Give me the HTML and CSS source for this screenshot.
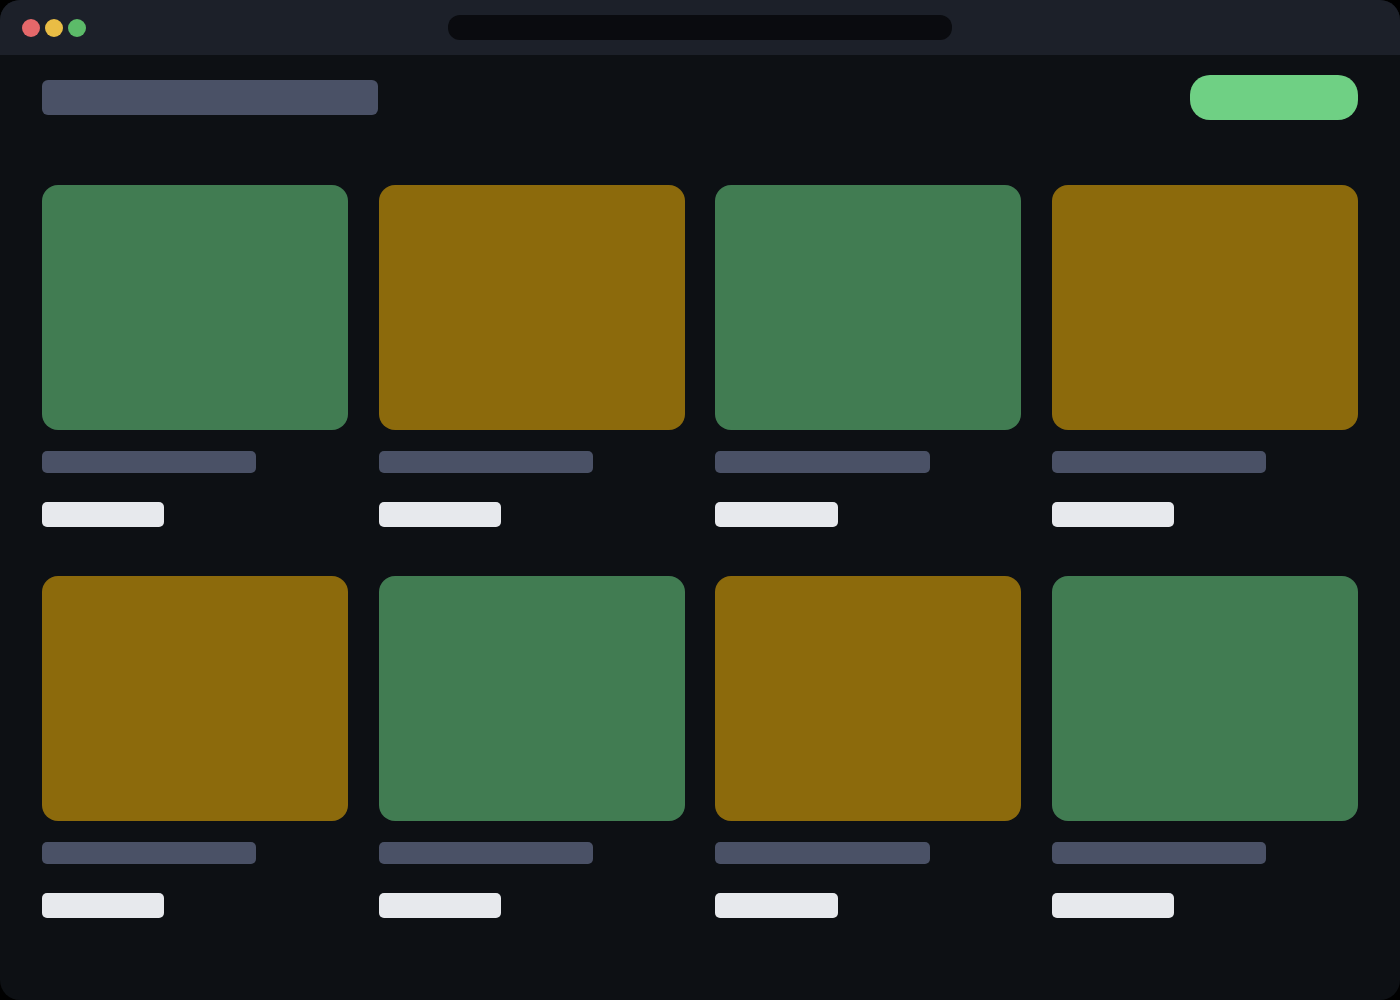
FILE: index.html
```html
<!DOCTYPE html>
<html lang="en">
<head>
    <meta charset="UTF-8">
    <meta name="viewport" content="width=device-width, initial-scale=1.0">
    <title>Product grid</title>
    <link rel="stylesheet" href="styles.css">
</head>
<body>
    <div class="window">
        <div class="titlebar">
            <div class="dots">
                <span class="dot dot-red"></span>
                <span class="dot dot-yellow"></span>
                <span class="dot dot-green"></span>
            </div>
            <div class="address-bar"></div>
        </div>

        <div class="content">
            <div class="header">
                <div class="title"></div>
                <div class="action-btn"></div>
            </div>

            <div class="grid">
                <div class="card">
                    <div class="thumb thumb-green"></div>
                    <div class="card-title"></div>
                    <div class="card-price"></div>
                </div>
                <div class="card">
                    <div class="thumb thumb-amber"></div>
                    <div class="card-title"></div>
                    <div class="card-price"></div>
                </div>
                <div class="card">
                    <div class="thumb thumb-green"></div>
                    <div class="card-title"></div>
                    <div class="card-price"></div>
                </div>
                <div class="card">
                    <div class="thumb thumb-amber"></div>
                    <div class="card-title"></div>
                    <div class="card-price"></div>
                </div>
                <div class="card">
                    <div class="thumb thumb-amber"></div>
                    <div class="card-title"></div>
                    <div class="card-price"></div>
                </div>
                <div class="card">
                    <div class="thumb thumb-green"></div>
                    <div class="card-title"></div>
                    <div class="card-price"></div>
                </div>
                <div class="card">
                    <div class="thumb thumb-amber"></div>
                    <div class="card-title"></div>
                    <div class="card-price"></div>
                </div>
                <div class="card">
                    <div class="thumb thumb-green"></div>
                    <div class="card-title"></div>
                    <div class="card-price"></div>
                </div>
            </div>
        </div>
    </div>
</body>
</html>
```

FILE: styles.css
```css
body {
    margin: 0;
    background-color: #000;
    font-family: 'Liberation Sans', sans-serif;
}
.window {
    height: 1000px;
    background-color: #0d1014;
    border-radius: 20px;
    overflow: hidden;
}
.titlebar {
    height: 55px;
    box-sizing: border-box;
    padding-left: 22px;
    background-color: #1c2029;
    display: flex;
    align-items: center;
}
.dots {
    display: flex;
    gap: 5px;
}
.dot {
    width: 18px;
    height: 18px;
    border-radius: 50%;
}
.dot-red {
    background-color: #e5686a;
}
.dot-yellow {
    background-color: #e9bd45;
}
.dot-green {
    background-color: #5cbb69;
}
.address-bar {
    width: 504px;
    height: 25px;
    border-radius: 12px;
    background-color: #0a0b0f;
    margin-left: 362px;
}
.content {
    padding: 20px 42px 0;
}
.header {
    display: flex;
    justify-content: space-between;
    align-items: center;
    margin-bottom: 65px;
}
.title {
    width: 336px;
    height: 35px;
    border-radius: 6px;
    background-color: #4a5166;
}
.action-btn {
    width: 168px;
    height: 45px;
    border-radius: 20px;
    background-color: #6fd084;
}
.grid {
    display: grid;
    grid-template-columns: repeat(4, 306px);
    justify-content: space-between;
    row-gap: 49px;
}
.thumb {
    height: 245px;
    border-radius: 16px;
}
.thumb-green {
    background-color: #417c52;
}
.thumb-amber {
    background-color: #8c6a0c;
}
.card-title {
    width: 70%;
    height: 22px;
    margin-top: 21px;
    border-radius: 5px;
    background-color: #4a5166;
}
.card-price {
    width: 40%;
    height: 25px;
    margin-top: 29px;
    border-radius: 5px;
    background-color: #e7e9ed;
}
```
